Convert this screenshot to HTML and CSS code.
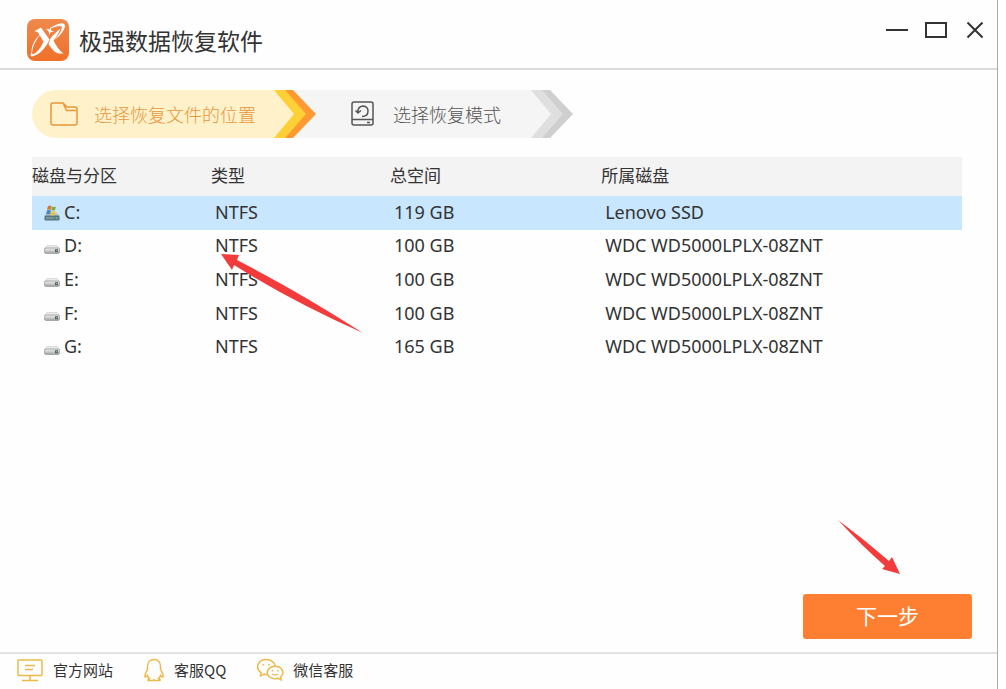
FILE: index.html
```html
<!DOCTYPE html>
<html lang="zh-CN">
<head>
<meta charset="utf-8">
<title>极强数据恢复软件</title>
<link rel="stylesheet" href="styles.css">
</head>
<body>
<svg class="defs" width="0" height="0" aria-hidden="true">
  <defs>
    <linearGradient id="brand" x1="0" y1="0" x2="0" y2="1"><stop offset="0" stop-color="#ee8a4c"/><stop offset="1" stop-color="#f0702a"/></linearGradient>
    <linearGradient id="metal" x1="0" y1="0" x2="0" y2="1"><stop offset="0" stop-color="#f2f2f2"/><stop offset="1" stop-color="#a2a5a5"/></linearGradient>
    <symbol id="drive" viewBox="0 0 16 9">
      <path d="M3 .6h10l2.500 3H.5z" fill="#ececec" stroke="#c5c5c5" stroke-width=".6"/>
      <rect x=".4" y="3" width="15.200" height="5.400" rx="1.600" fill="url(#metal)" stroke="#969999" stroke-width=".8"/>
      <rect x="11" y="4.200" width="3" height="3" fill="#59615f"/>
      <rect x="12" y="5" width="1.400" height="1.200" fill="#7dbb77"/>
    </symbol>
  </defs>
</svg>
<div class="window">
  <header class="titlebar">
    <svg class="logo" viewBox="0 0 42 42" aria-hidden="true">
      <rect width="42" height="42" rx="8" fill="url(#brand)"/>
      <path d="M7.500 12L14 8.500 22.500 20.500C20 27 13 36 5 37.500 3 37.500 3.500 35 4.500 33 4.500 35.500 6.500 35.500 9 33.500 13 30 15.500 25.500 16.500 22.500L11 13.500z" fill="#fff"/>
      <path d="M23.500 19.500C26 16 30 12 33.500 9.500 32.500 13 29.500 18 26.500 21.500 29.500 27 32 31.500 36.500 34.500H31C27 33 24 29 21.500 25z" fill="#fff"/>
      <path d="M5 36C3 28 8 19 15 14 9 20 5 28 5 36z" fill="#fff"/>
      <path d="M23 9.500C29 5 36 2.500 37.800 6 39 9.500 33 17 27.500 21 32 15.500 36 10 34.500 7.500 33 6 28 8 23 9.500z" fill="#fff"/>
      <path d="M19 9.500l3.200 1 2-2.800-.2 3.600 3 1.500-3.500.4-1.200 2.800-.5-3.300z" fill="#fff"/>
    </svg>
    <h1 class="title">极强数据恢复软件</h1>
    <div class="controls">
      <button class="control" type="button" aria-label="最小化"><svg viewBox="0 0 24 24"><path d="M1 12h22"/></svg></button>
      <button class="control" type="button" aria-label="最大化"><svg viewBox="0 0 24 24"><path d="M2 5h20v14H2z"/></svg></button>
      <button class="control" type="button" aria-label="关闭"><svg viewBox="0 0 24 24"><path d="M4.500 4.500l15 15M19.500 4.500l-15 15"/></svg></button>
    </div>
  </header>
  <main class="content">
    <ol class="steps">
      <li class="step step-active" aria-current="step">
        <svg class="step-icon" viewBox="0 0 28 26" aria-hidden="true"><path d="M3 2h10l4 4h8q2 0 2 2v14q0 2-2 2H3q-2 0-2-2V4q0-2 2-2z"/><path d="M13.500 3l3 6.500H26"/></svg>
        <span>选择恢复文件的位置</span>
        <svg class="chevron" viewBox="0 0 42 48" aria-hidden="true"><path d="M0 0h42v48H0z" fill="#f5f5f6"/><path d="M0 0h19L42 24 19 48H0z" fill="#ff9a32"/><path d="M0 0h11L32 24 11 48H0z" fill="#ffcf36"/><path d="M0 0L20 24 0 48z" fill="#fff2cb"/></svg>
      </li>
      <li class="step">
        <svg class="step-icon" viewBox="0 0 28 26" aria-hidden="true"><rect x="3" y="1" width="21" height="23" rx="2"/><path d="M3 18.500h21M18 21.500h3M13 15.500q6 0 6-5.500 0-4.500-5-5-5.500.5-5 6.500M6.500 9.500L9 12l3-2.500"/></svg>
        <span>选择恢复模式</span>
        <svg class="chevron" viewBox="0 0 42 48" aria-hidden="true"><path d="M0 0h19L42 24 19 48H0z" fill="#cfcfcf"/><path d="M0 0h11L32 24 11 48H0z" fill="#dfdfdf"/><path d="M0 0L20 24 0 48z" fill="#f5f5f6"/></svg>
      </li>
    </ol>
    <table class="disks">
      <thead>
        <tr><th scope="col" class="col-name">磁盘与分区</th><th scope="col" class="col-type">类型</th><th scope="col" class="col-size">总空间</th><th scope="col">所属磁盘</th></tr>
      </thead>
      <tbody>
        <tr class="selected"><td><span class="volume"><svg class="drive system" viewBox="0 0 16 16" aria-hidden="true"><path d="M3 8h10l2.500 3H.5z" fill="#b5c4c9"/><rect x=".5" y="10.500" width="15" height="5" rx="1" fill="#597782"/><path d="M2 13h8" stroke="#9cb4bd"/><path d="M11.500 13h2" stroke="#72d669" stroke-width="1.500"/><path d="M4 1q2-1 3.500.3L7 5Q5 4 3 5z" fill="#d87932"/><path d="M8 1.500q2 1 4 0L11 5Q9 6 7.500 5z" fill="#80ab36"/><path d="M3 5.500q2-1 4 .2L6 9.500Q4 8.500 2 9.500z" fill="#4a85bd"/><path d="M7.500 6q2 1 4 0l-1 4q-2 1-4-.3z" fill="#eec43b"/></svg>C:</span></td><td>NTFS</td><td>119 GB</td><td>Lenovo SSD</td></tr>
        <tr><td><span class="volume"><svg class="drive" aria-hidden="true"><use href="#drive"/></svg>D:</span></td><td>NTFS</td><td>100 GB</td><td>WDC WD5000LPLX-08ZNT</td></tr>
        <tr><td><span class="volume"><svg class="drive" aria-hidden="true"><use href="#drive"/></svg>E:</span></td><td>NTFS</td><td>100 GB</td><td>WDC WD5000LPLX-08ZNT</td></tr>
        <tr><td><span class="volume"><svg class="drive" aria-hidden="true"><use href="#drive"/></svg>F:</span></td><td>NTFS</td><td>100 GB</td><td>WDC WD5000LPLX-08ZNT</td></tr>
        <tr><td><span class="volume"><svg class="drive" aria-hidden="true"><use href="#drive"/></svg>G:</span></td><td>NTFS</td><td>165 GB</td><td>WDC WD5000LPLX-08ZNT</td></tr>
      </tbody>
    </table>
    <svg class="pointer pointer-row" viewBox="0 0 143 80" aria-hidden="true"><path d="M0 0l18 1-2 5Q80 39 142 79 70 47 13 11l-2 5z"/></svg>
    <div class="actions">
      <button class="next" type="button">下一步</button>
      <svg class="pointer pointer-next" viewBox="0 0 63 55" aria-hidden="true"><path d="M62 54l-18-5 3-3Q24 26 0 0 27 20 51 41l3-4z"/></svg>
    </div>
  </main>
  <footer class="footer">
    <a class="link" href="#site"><svg class="link-icon" viewBox="0 0 28 24" aria-hidden="true"><rect x="2" y="2" width="24" height="15.500" rx="1"/><path d="M9 7.500h10M9 11.500h8M14 18v4M6 22.500h16"/></svg>官方网站</a>
    <a class="link" href="#qq"><svg class="link-icon narrow" viewBox="0 0 22 24" aria-hidden="true"><path d="M11 1.500c-4 0-6.500 3-6.500 7v3c-1 2-3 4-2.500 7.500 1 .2 1.800-.6 2.500-1.500q.5 2 2 3c-1 .5-2 1-1.500 2h5l1-.8 1 .8h5c.5-1-.5-1.500-1.500-2q1.500-1 2-3c.7.900 1.500 1.700 2.500 1.500.5-3.500-1.500-5.500-2.500-7.500v-3c0-4-2.500-7-6.500-7z"/></svg>客服QQ</a>
    <a class="link" href="#wechat"><svg class="link-icon" viewBox="0 0 28 24" aria-hidden="true"><path d="M12 16.500q-1.500.3-4-.3L4.500 18l.6-3.300C-2 9.500 3 1.500 10 1.500c5 0 8.500 3 9 6.500"/><path d="M19 8.200c-10 0-10.500 12.500 0 12.500q1.500 0 3-.5l3 1.600-.5-2.800c5-4 1.500-10.800-5.500-10.800z"/><path d="M7 6v1.600M13 6v1.600M16.500 12v1.500M22 12v1.500M16 16q3 2 6 0"/></svg>微信客服</a>
  </footer>
</div>
</body>
</html>
```
FILE: styles.css
```css
* { box-sizing: border-box; }
body {
  margin: 0;
  padding-right: 8px;
  background: #fff;
  color: #222;
  font-family: "Noto Sans CJK SC", sans-serif;
  font-weight: 400;
}
button { font: inherit; border: 0; padding: 0; cursor: pointer; }
.defs { position: absolute; }
.window {
  display: flex;
  flex-direction: column;
  min-height: 100vh;
  background: #fefefe;
  border-right: 1px solid #a3adb0;
}
.titlebar {
  display: flex;
  align-items: center;
  min-height: 70px;
  padding: 12px 10px 0 27px;
  border-bottom: 2px solid #dcdcdc;
}
.logo { width: 42px; height: 42px; margin-right: 10px; }
.title { flex: 1; margin: 0; font-size: 23px; line-height: 32px; font-weight: 400; color: #333; }
.controls { display: flex; gap: 15px; align-self: flex-start; padding-top: 6px; }
.control { width: 24px; height: 24px; background: none; }
.control svg { display: block; width: 24px; height: 24px; fill: none; stroke: #333; stroke-width: 2; }
.content {
  position: relative;
  flex: 1;
  display: flex;
  flex-direction: column;
  padding: 20px 25px 13px 32px;
}
.steps { display: flex; margin: 0 0 19px; padding: 0; list-style: none; font-size: 18px; line-height: 26px; font-weight: 300; }
.step { display: flex; align-items: center; height: 48px; background: #f5f5f6; color: #555; padding-left: 33px; }
.step-active { background: #fff2cb; color: #e8963a; border-radius: 24px 0 0 24px; padding-left: 18px; }
.step-icon { width: 28px; height: 26px; margin-right: 16px; fill: none; stroke: currentColor; stroke-width: 1.500; }
.step .chevron { width: 42px; height: 48px; margin-left: 30px; background: #fefefe; }
.step-active .chevron { margin-left: 18px; }
.disks { width: calc(100% - 10px); height: 207px; table-layout: fixed; border-collapse: collapse; font-size: 17px; line-height: 24px; }
.disks th, .disks td { padding: 0 0 2px; text-align: left; font-weight: 400; }
.disks th { height: 39px; padding-bottom: 4px; background: #f3f3f3; color: #333; }
.disks td { font-family: "Noto Sans", "Noto Sans CJK SC", sans-serif; font-size: 18px; color: #333; padding-left: 4px; }
.disks td:first-child { padding-left: 12px; }
.col-name, .col-type { width: 19.250%; }
.col-size { width: 22.700%; }
.selected { background: #c8e6fd; }
.volume { display: flex; align-items: center; gap: 4px; }
.drive { width: 16px; height: 9px; margin-top: 8px; }
.system { height: 16px; margin-top: 2px; }
.pointer { position: absolute; fill: #f43b3b; }
.pointer-row { left: 221px; top: 184px; width: 143px; height: 80px; }
.actions { position: relative; display: flex; justify-content: flex-end; margin-top: auto; }
.pointer-next { right: 71px; bottom: 64px; width: 63px; height: 55px; }
.next { width: 169px; height: 45px; padding-bottom: 4px; border-radius: 3px; background: #ff7f32; color: #fff; font-size: 21px; font-weight: 400; }
.footer { display: flex; align-items: center; gap: 30px; min-height: 37px; padding: 0 0 3px 16px; border-top: 2px solid #e2e2e2; }
.link { display: flex; align-items: center; gap: 9px; color: #333; font-size: 15px; line-height: 20px; text-decoration: none; }
.link-icon { width: 28px; height: 24px; fill: none; stroke: #edb947; stroke-width: 1.500; }
.narrow { width: 22px; }
```
